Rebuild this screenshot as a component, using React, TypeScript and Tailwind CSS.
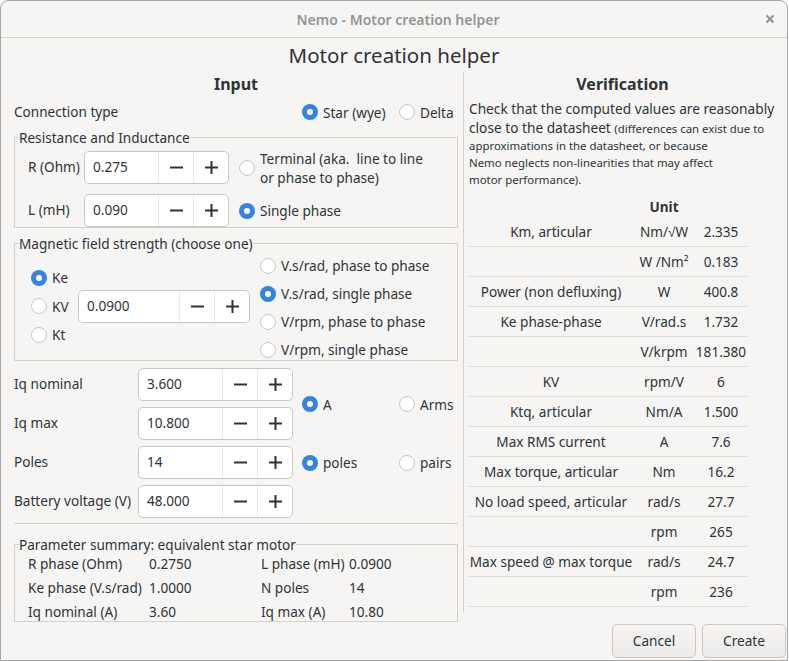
import type { ReactNode } from 'react';

function Radio({ checked, label }: { checked?: boolean; label: ReactNode }) {
  return (
    <div className="flex items-center gap-[5px] leading-[19px]">
      {checked ? (
        <span className="flex h-[16px] w-[16px] shrink-0 items-center justify-center rounded-full bg-[#3584e4]">
          <span className="h-[6px] w-[6px] rounded-full bg-white" />
        </span>
      ) : (
        <span className="h-[16px] w-[16px] shrink-0 rounded-full border border-[#cdc7c2] bg-white" />
      )}
      <span>{label}</span>
    </div>
  );
}

function SpinBox({ value, className }: { value: string; className: string }) {
  return (
    <div className={`flex h-[33px] rounded-[5px] border border-[#cdc7c2] bg-white ${className}`}>
      <div className="flex flex-1 items-center pl-[8px]">{value}</div>
      <div className="flex w-[35px] items-center justify-center border-l border-[#ebe8e5]">
        <svg width="15" height="15" viewBox="0 0 15 15">
          <path d="M1 7.5h13" stroke="#2e3436" strokeWidth="2" />
        </svg>
      </div>
      <div className="flex w-[35px] items-center justify-center border-l border-[#ebe8e5]">
        <svg width="15" height="15" viewBox="0 0 15 15">
          <path d="M1 7.5h13M7.5 1v13" stroke="#2e3436" strokeWidth="2" />
        </svg>
      </div>
    </div>
  );
}

const rows = [
  { label: 'Km, articular', unit: 'Nm/√W', value: '2.335' },
  { label: '', unit: 'W /Nm²', value: '0.183' },
  { label: 'Power (non defluxing)', unit: 'W', value: '400.8' },
  { label: 'Ke phase-phase', unit: 'V/rad.s', value: '1.732' },
  { label: '', unit: 'V/krpm', value: '181.380' },
  { label: 'KV', unit: 'rpm/V', value: '6' },
  { label: 'Ktq, articular', unit: 'Nm/A', value: '1.500' },
  { label: 'Max RMS current', unit: 'A', value: '7.6' },
  { label: 'Max torque, articular', unit: 'Nm', value: '16.2' },
  { label: 'No load speed, articular', unit: 'rad/s', value: '27.7' },
  { label: '', unit: 'rpm', value: '265' },
  { label: 'Max speed @ max torque', unit: 'rad/s', value: '24.7' },
  { label: '', unit: 'rpm', value: '236' },
];

export default function App() {
  return (
    <div className="h-[661px] w-[789px] bg-white font-['Noto_Sans',sans-serif] text-[13.6px] text-[#2e3436]">
      <div className="flex h-[661px] w-[788px] flex-col rounded-t-[8px] border border-[#a8a6a4] bg-[#f6f5f4]">
        {/* header bar */}
        <div className="flex h-[37px] shrink-0 items-center border-b border-[#d3cfcb] pr-[12px]">
          <div className="flex-1 pl-[30px] text-center text-[14px] font-semibold text-[#929595]">
            Nemo - Motor creation helper
          </div>
          <svg width="10" height="10" viewBox="0 0 10 10">
            <path d="M1.5 1.5l7 7M8.5 1.5l-7 7" stroke="#8e9192" strokeWidth="2" />
          </svg>
        </div>

        <div className="h-[34px] shrink-0 text-center text-[20.5px] leading-[34px]">Motor creation helper</div>

        <div className="flex h-[550px] shrink-0">
          {/* Input */}
          <div className="w-[462px] shrink-0 pl-[13px] pr-[5px]">
            <div className="h-[24px] text-center text-[16px] font-bold leading-[24px]">Input</div>
            <div className="grid h-[32px] grid-cols-[288px_97px_1fr] items-center">
              <span>Connection type</span>
              <Radio checked label="Star (wye)" />
              <Radio label="Delta" />
            </div>

            <fieldset className="border border-[#d3cfcb] px-[4px]">
              <legend className="leading-[19px]">Resistance and Inductance</legend>
              <div className="grid grid-cols-[56px_145px_1fr] grid-rows-[33px_33px] items-center gap-y-[10px] pl-[9px] pt-[4px]">
                <span>R (Ohm)</span>
                <SpinBox value="0.275" className="w-[145px]" />
                <div className="ml-[10px]">
                  <Radio label={<>Terminal (aka.&nbsp; line to line<br />or phase to phase)</>} />
                </div>
                <span>L (mH)</span>
                <SpinBox value="0.090" className="w-[145px]" />
                <div className="ml-[10px]">
                  <Radio checked label="Single phase" />
                </div>
              </div>
            </fieldset>

            <fieldset className="mt-[6px] border border-[#d3cfcb] px-[4px]">
              <legend className="leading-[19px]">Magnetic field strength (choose one)</legend>
              <div className="flex items-center pb-[1px] pl-[12px]">
                <div className="flex w-[47px] flex-col gap-[9.5px]">
                  <Radio checked label="Ke" />
                  <Radio label="KV" />
                  <Radio label="Kt" />
                </div>
                <SpinBox value="0.0900" className="w-[172px]" />
                <div className="ml-[10px] flex flex-col gap-[9px] pt-[3px]">
                  <Radio label="V.s/rad, phase to phase" />
                  <Radio checked label="V.s/rad, single phase" />
                  <Radio label="V/rpm, phase to phase" />
                  <Radio label="V/rpm, single phase" />
                </div>
              </div>
            </fieldset>

            <div className="mt-[7px] grid grid-cols-[124px_155px_1fr] grid-rows-[33px_33px_33px_33px] items-center gap-y-[6px]">
              <span className="col-start-1 row-start-1">Iq nominal</span>
              <SpinBox value="3.600" className="col-start-2 row-start-1 w-[155px]" />
              <span className="col-start-1 row-start-2">Iq max</span>
              <SpinBox value="10.800" className="col-start-2 row-start-2 w-[155px]" />
              <div className="col-start-3 row-span-2 row-start-1 grid grid-cols-[97px_1fr] pl-[9px]">
                <Radio checked label="A" />
                <Radio label="Arms" />
              </div>
              <span className="col-start-1 row-start-3">Poles</span>
              <SpinBox value="14" className="col-start-2 row-start-3 w-[155px]" />
              <div className="col-start-3 row-start-3 grid grid-cols-[97px_1fr] pl-[9px]">
                <Radio checked label="poles" />
                <Radio label="pairs" />
              </div>
              <span className="col-start-1 row-start-4 whitespace-nowrap">Battery voltage (V)</span>
              <SpinBox value="48.000" className="col-start-2 row-start-4 w-[155px]" />
            </div>

            <div className="mt-[5px] h-px bg-[#d3cfcb]" />

            <fieldset className="mt-[11px] border border-[#d3cfcb] px-[4px]">
              <legend className="leading-[19px]">Parameter summary: equivalent star motor</legend>
              <div className="grid grid-cols-[121px_112px_88px_1fr] gap-y-[5px] pl-[9px] leading-[19px]">
                <span>R phase (Ohm)</span>
                <span>0.2750</span>
                <span>L phase (mH)</span>
                <span>0.0900</span>
                <span>Ke phase (V.s/rad)</span>
                <span>1.0000</span>
                <span>N poles</span>
                <span>14</span>
                <span>Iq nominal (A)</span>
                <span>3.60</span>
                <span>Iq max (A)</span>
                <span>10.80</span>
              </div>
            </fieldset>
          </div>

          {/* Verification */}
          <div className="h-[540px] flex-1 border-l border-[#d3cfcb] pl-[5px] pr-[11px]">
            <div className="h-[24px] text-center text-[16px] font-bold leading-[24px]">Verification</div>
            <div className="mt-[3px] whitespace-nowrap">
              <div className="h-[19px] text-[13.7px] leading-[19px]">Check that the computed values are reasonably</div>
              <div className="h-[19px] leading-[19px]">
                <span className="text-[13.7px]">close to the datasheet </span>
                <span className="text-[11.4px]">(differences can exist due to</span>
              </div>
              <div className="h-[18px] text-[11.4px] leading-[18px]">approximations in the datasheet, or because</div>
              <div className="h-[16px] text-[11.4px] leading-[16px]">Nemo neglects non-linearities that may affect</div>
              <div className="h-[18px] text-[11.4px] leading-[18px]">motor performance).</div>
            </div>

            <div className="mt-[8px] w-[278px]">
              <div className="grid h-[20px] grid-cols-[164px_62px_52px] text-center font-bold leading-[20px]">
                <span />
                <span>Unit</span>
                <span />
              </div>
              {rows.map((row, i) => (
                <div
                  key={i}
                  className="grid h-[30px] grid-cols-[164px_62px_52px] items-center border-b border-[#dedad6] pt-[1px] text-center whitespace-nowrap"
                >
                  <span>{row.label}</span>
                  <span>{row.unit}</span>
                  <span>{row.value}</span>
                </div>
              ))}
            </div>
          </div>
        </div>

        <div className="mt-[2px] flex justify-end gap-[6px] pr-[1px]">
          <button className="h-[34px] w-[84px] rounded-[5px] border border-[#cdc7c2] bg-gradient-to-b from-[#f6f5f4] to-[#edebe9]">
            Cancel
          </button>
          <button className="h-[34px] w-[84px] rounded-[5px] border border-[#cdc7c2] bg-gradient-to-b from-[#f6f5f4] to-[#edebe9]">
            Create
          </button>
        </div>
      </div>
    </div>
  );
}
